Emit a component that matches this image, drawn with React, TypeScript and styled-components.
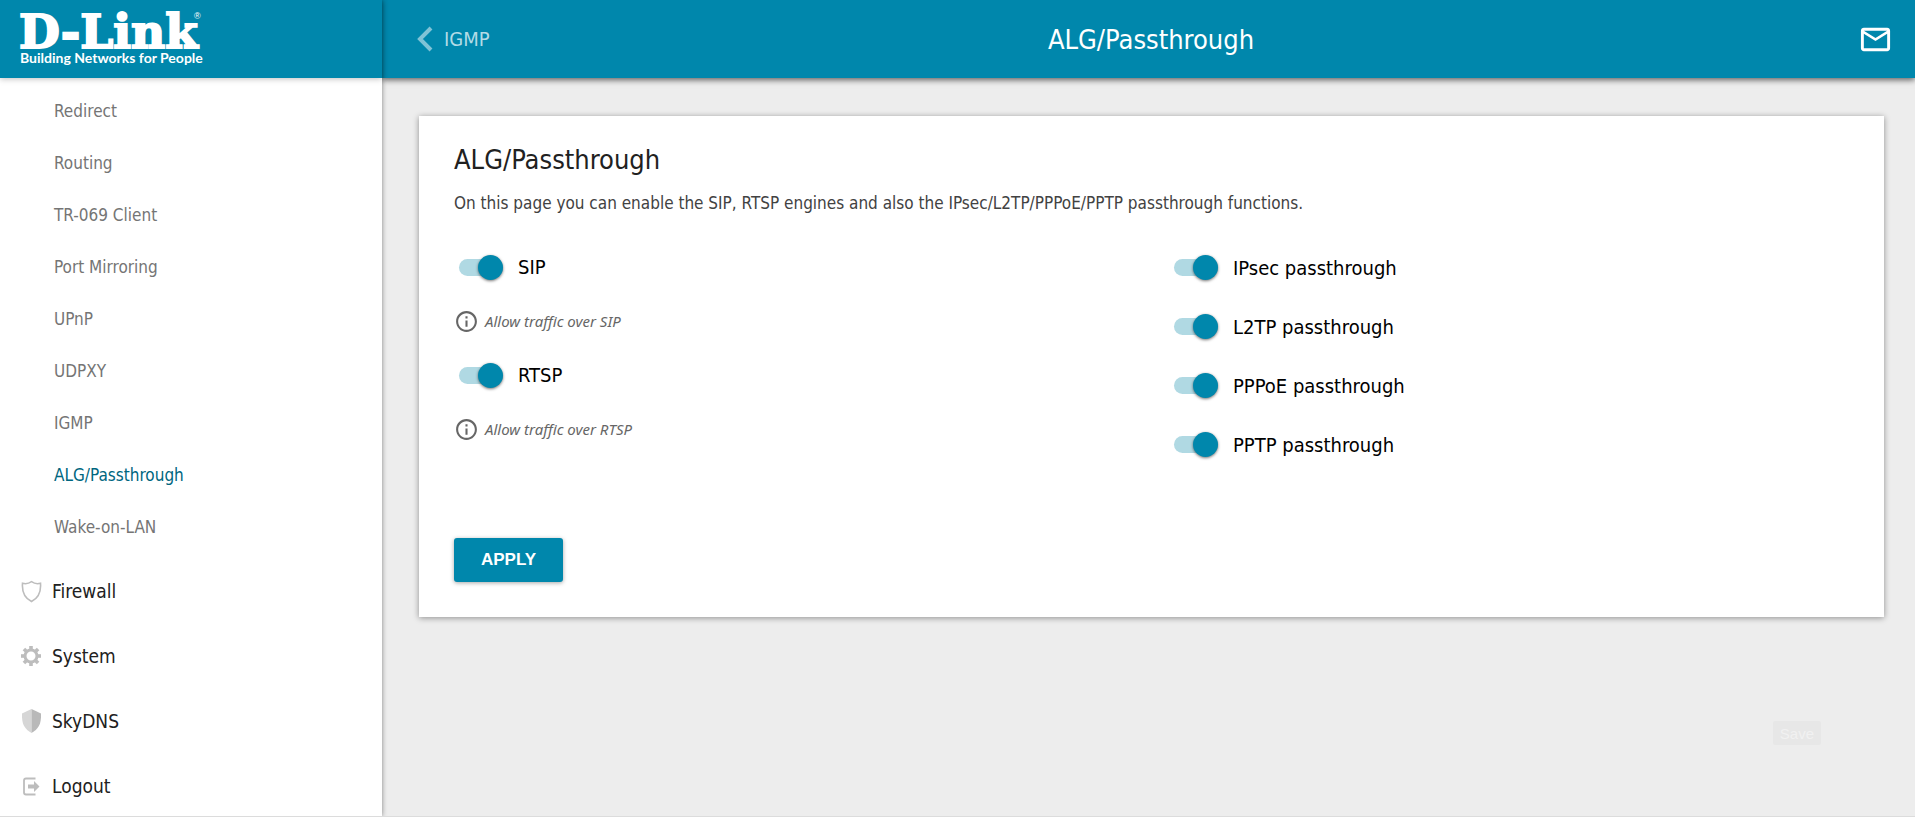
import React, { useId, useState } from "react";
import styled, { createGlobalStyle } from "styled-components";
import { MdMailOutline, MdOutlineInfo } from "react-icons/md";

const teal = "#0087ac";
const ui = `"DejaVu Sans Condensed", "DejaVu Sans", sans-serif`;

const GlobalStyle = createGlobalStyle`
  *, *::before, *::after { box-sizing: border-box; }
  body { margin: 0; background: #ededed; font-family: ${ui}; color: #212121; }
  button, input { font: inherit; }
`;

const Page = styled.div`
  display: grid;
  grid-template-columns: 382px minmax(0, 1fr);
  height: 100vh;
  overflow: hidden;
  border-bottom: 1px solid #dcdcdc;
`;

const Sidebar = styled.aside`
  position: relative;
  z-index: 2;
  display: flex;
  flex-direction: column;
  min-height: 0;
  background: #fff;
  box-shadow: 0 0 5px rgba(0, 0, 0, 0.45);
`;

const Brand = styled.a`
  flex: none;
  display: block;
  height: 78px;
  padding: 0 18px;
  background: ${teal};
  box-shadow: 0 1px 6px rgba(0, 0, 0, 0.25);
`;

const LogoText = styled.text`
  fill: #fff;
  font-family: "DejaVu Serif", serif;
  font-weight: 700;
  font-size: 47px;
  stroke: #fff;
  stroke-width: 2px;
`;

const Tagline = styled.text`
  fill: #fff;
  font-family: Lato, sans-serif;
  font-weight: 700;
  font-size: 14px;
`;

const Registered = styled.text`
  fill: #fff;
  font-family: "Liberation Sans", sans-serif;
  font-size: 9px;
`;

const Nav = styled.nav`
  flex: 1;
  min-height: 0;
  overflow: hidden;
  padding-top: 7px;
`;

const List = styled.ul`
  list-style: none;
  margin: 0 0 5px;
  padding: 0;
`;

const SubLink = styled.a<{ $active?: boolean }>`
  display: flex;
  align-items: center;
  height: 52px;
  padding-left: 54px;
  font-size: 17px;
  color: ${(p) => (p.$active ? "#00667f" : "#757575")};
  text-decoration: none;
`;

const MainLink = styled.a`
  display: flex;
  align-items: center;
  gap: 10px;
  height: 65px;
  padding-left: 20px;
  font-size: 19px;
  color: #212121;
  text-decoration: none;

  svg { flex: none; }
`;

const Main = styled.main`
  display: flex;
  flex-direction: column;
  min-width: 0;
`;

const TopBar = styled.header`
  flex: none;
  display: grid;
  grid-template-columns: 1fr auto 1fr;
  align-items: center;
  height: 78px;
  padding: 0 22px 0 27px;
  background: ${teal};
  color: #fff;
  box-shadow: 0 2px 6px rgba(0, 0, 0, 0.6);
`;

const Back = styled.a`
  display: flex;
  align-items: center;
  gap: 11px;
  padding-left: 7px;
  font-size: 20px;
  color: #b3dbe6;
  text-decoration: none;
`;

const TopTitle = styled.div`
  font-size: 27px;
`;

const MailButton = styled.button`
  justify-self: end;
  display: flex;
  padding: 0;
  border: 0;
  background: none;
  color: #fff;
  cursor: pointer;
`;

const Card = styled.section`
  margin: 38px 31px 0 37px;
  padding: 24px 35px 35px;
  background: #fff;
  box-shadow: 0 1px 6px rgba(0, 0, 0, 0.4);
`;

const Heading = styled.h1`
  margin: 0;
  font-size: 27px;
  line-height: 40px;
  font-weight: 400;
`;

const Description = styled.p`
  margin: 11px 0 0;
  font-size: 17px;
  line-height: 24px;
  color: #424242;
`;

const Columns = styled.div`
  display: grid;
  grid-template-columns: 1fr 1fr;
  gap: 35px;
  margin-top: 23px;
`;

const Column = styled.div<{ $rowHeight: number; $top?: number }>`
  display: grid;
  grid-auto-rows: ${(p) => p.$rowHeight}px;
  align-content: start;
  align-items: center;
  padding-top: ${(p) => p.$top ?? 0}px;
`;

const SwitchRow = styled.label`
  display: flex;
  align-items: center;
  gap: 15px;
  padding-left: 5px;
  font-size: 20px;
  color: #000;
  cursor: pointer;
`;

const Switch = styled.input`
  appearance: none;
  display: flex;
  align-items: center;
  width: 44px;
  height: 17px;
  margin: 0;
  border-radius: 9px;
  background: #bdbdbd;
  cursor: pointer;

  &::before {
    content: "";
    width: 25px;
    height: 25px;
    border-radius: 50%;
    background: #fafafa;
    box-shadow: 0 1px 3px rgba(0, 0, 0, 0.55);
  }
  &:checked { background: #b0d9e3; justify-content: flex-end; }
  &:checked::before { background: ${teal}; }
`;

const Hint = styled.p`
  display: flex;
  align-items: center;
  gap: 6px;
  margin: 0;
  font-family: "Noto Sans", sans-serif;
  font-size: 15px;
  font-style: italic;
  color: #666;

  svg { flex: none; }
`;

const Apply = styled.button`
  display: block;
  height: 44px;
  margin-top: 64px;
  padding: 0 27px;
  border: 0;
  border-radius: 3px;
  background: ${teal};
  color: #fff;
  font-family: "Liberation Sans", Arial, sans-serif;
  font-size: 17px;
  font-weight: 700;
  box-shadow: 0 1px 4px rgba(0, 0, 0, 0.35);
  cursor: pointer;
`;

const SaveButton = styled.button`
  position: fixed;
  right: 94px;
  bottom: 72px;
  height: 24px;
  padding: 0 7px;
  border: 0;
  border-radius: 2px;
  background: #e7e7e7;
  color: #f1f1f1;
  font-family: "Liberation Sans", Arial, sans-serif;
  font-size: 15px;
`;

const Logo = () => (
  <svg width="190" height="78" viewBox="0 0 190 78" role="img" aria-label="D-Link">
    <LogoText x="1" y="48">D-Link</LogoText>
    <Registered x="176" y="19">®</Registered>
    <Tagline x="2" y="63">Building Networks for People</Tagline>
  </svg>
);

const FirewallIcon = () => (
  <svg width="22" height="24" viewBox="0 0 22 24" fill="none" stroke="#bdbdbd" strokeWidth="1.6">
    <path d="M11.500 2.700C9 4.500 5.500 5.100 2.500 4.300c-.6 7.500 1.700 14.500 9 18.200 7.300-3.700 9.600-10.700 9-18.200C17.500 5.100 14 4.500 11.500 2.700z" />
  </svg>
);

const SystemIcon = () => (
  <svg width="22" height="24" viewBox="0 0 22 24" fill="none" stroke="#bdbdbd">
    <circle cx="11" cy="12" r="6" strokeWidth="3" />
    {[0, 45, 90, 135, 180, 225, 270, 315].map((a) => (
      <path key={a} d="M11 2v4" strokeWidth="3.600" transform={`rotate(${a} 11 12)`} />
    ))}
  </svg>
);

const SkyDnsIcon = () => (
  <svg width="22" height="24" viewBox="0 0 22 24">
    <path d="M11.500 0v24C5 20 1.500 16 2 4.500z" fill="#d6d6d6" />
    <path d="M11.500 0v24C18 20 21.500 16 21 4.500z" fill="#b9b9b9" />
  </svg>
);

const LogoutIcon = () => (
  <svg width="22" height="24" viewBox="0 0 22 24">
    <path d="M15.500 4.500H6Q4 4.500 4 6.500v12q0 2 2 2h9.500" fill="none" stroke="#bdbdbd" strokeWidth="1.800" />
    <path d="M8 10.500h6V7l5.500 5.500L14 18v-3.500H8z" fill="#bdbdbd" />
  </svg>
);

const subItems = [
  "Redirect",
  "Routing",
  "TR-069 Client",
  "Port Mirroring",
  "UPnP",
  "UDPXY",
  "IGMP",
  "ALG/Passthrough",
  "Wake-on-LAN",
];

const mainItems = [
  { label: "Firewall", Icon: FirewallIcon },
  { label: "System", Icon: SystemIcon },
  { label: "SkyDNS", Icon: SkyDnsIcon },
  { label: "Logout", Icon: LogoutIcon },
];

const Toggle = ({ label }: { label: string }) => {
  const id = useId();
  const [on, setOn] = useState(true);
  return (
    <SwitchRow htmlFor={id}>
      <Switch id={id} type="checkbox" role="switch" checked={on} onChange={() => setOn(!on)} />
      {label}
    </SwitchRow>
  );
};

const Info = ({ children }: { children: React.ReactNode }) => (
  <Hint>
    <MdOutlineInfo size={25} />
    {children}
  </Hint>
);

export default function App() {
  return (
    <>
      <GlobalStyle />
      <Page>
        <Sidebar>
          <Brand href="#">
            <Logo />
          </Brand>
          <Nav>
            <List>
              {subItems.map((s) => (
                <li key={s}>
                  <SubLink href="#" $active={s === "ALG/Passthrough"}>{s}</SubLink>
                </li>
              ))}
            </List>
            <List>
              {mainItems.map(({ label, Icon }) => (
                <li key={label}>
                  <MainLink href="#">
                    <Icon />
                    {label}
                  </MainLink>
                </li>
              ))}
            </List>
          </Nav>
        </Sidebar>
        <Main>
          <TopBar>
            <Back href="#">
              <svg width="17" height="26" viewBox="0 0 17 26" fill="none" stroke="#80c3d6" strokeWidth="4">
                <path d="M15 2L4 13l11 11" />
              </svg>
              IGMP
            </Back>
            <TopTitle>ALG/Passthrough</TopTitle>
            <MailButton aria-label="Notifications">
              <MdMailOutline size={35} />
            </MailButton>
          </TopBar>
          <Card>
            <Heading>ALG/Passthrough</Heading>
            <Description>
              On this page you can enable the SIP, RTSP engines and also the IPsec/L2TP/PPPoE/PPTP passthrough functions.
            </Description>
            <Columns>
              <Column $rowHeight={54} $top={2}>
                <Toggle label="SIP" />
                <Info>Allow traffic over SIP</Info>
                <Toggle label="RTSP" />
                <Info>Allow traffic over RTSP</Info>
              </Column>
              <Column $rowHeight={59}>
                <Toggle label="IPsec passthrough" />
                <Toggle label="L2TP passthrough" />
                <Toggle label="PPPoE passthrough" />
                <Toggle label="PPTP passthrough" />
              </Column>
            </Columns>
            <Apply>APPLY</Apply>
          </Card>
        </Main>
      </Page>
      <SaveButton>Save</SaveButton>
    </>
  );
}
